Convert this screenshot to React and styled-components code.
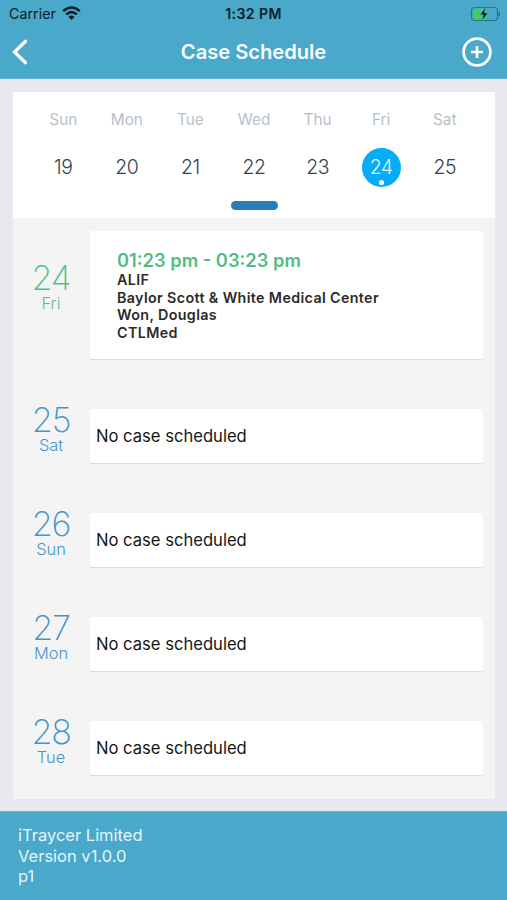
import React from 'react';
import styled, { createGlobalStyle } from 'styled-components';

const GlobalStyle = createGlobalStyle`
  *, *::before, *::after { box-sizing: border-box; }
  body { margin: 0; font-family: Inter, "Liberation Sans", sans-serif; }
`;

const Screen = styled.div`
  width: 507px;
  height: 900px;
  display: flex;
  flex-direction: column;
  background: #e9e8ee;
  overflow: hidden;
`;

const Header = styled.header`
  height: 79px;
  flex: none;
  background: #4aa8ca;
  border-bottom: 1px solid #68b3d0;
`;

const StatusBar = styled.div`
  height: 27px;
  display: grid;
  grid-template-columns: 1fr auto 1fr;
  align-items: center;
  padding: 0 6px;
  color: #0b1d26;
`;

const Carrier = styled.div`
  display: flex;
  align-items: center;
  gap: 6px;
  margin-left: 3px;
  font-size: 14.2px;
  letter-spacing: 0.05px;
`;

const Clock = styled.div`
  font-size: 14.1px;
  font-weight: 600;
  letter-spacing: 0.4px;
`;

const Battery = styled.svg`
  justify-self: end;
`;

const NavBar = styled.div`
  height: 50px;
  display: grid;
  grid-template-columns: 1fr auto 1fr;
  align-items: center;
  padding: 0 12px;
`;

const IconButton = styled.button`
  display: flex;
  padding: 0;
  border: 0;
  background: none;
  color: #fff;
  justify-self: ${(p) => p.$side};
  margin-right: ${(p) => (p.$side === 'end' ? '2px' : '0')};
`;

const Title = styled.h1`
  margin: 0;
  color: #f7fcfe;
  font-size: 20.2px;
  line-height: 50px;
  font-weight: 600;
  letter-spacing: -0.05px;
`;

const Body = styled.main`
  height: 732px;
  flex: none;
  padding: 13px 12px 12px 13px;
  display: flex;
  flex-direction: column;
`;

const Week = styled.section`
  height: 126px;
  flex: none;
  background: #fff;
  padding: 18px 18.5px 0;
`;

const DayGrid = styled.div`
  display: grid;
  grid-template-columns: repeat(7, 1fr);
  justify-items: center;
`;

const DayName = styled.div`
  height: 20px;
  line-height: 20px;
  font-size: 15.3px;
  color: #b7c0c8;
`;

const DayNumber = styled.div`
  position: relative;
  width: 39px;
  height: 39px;
  margin-top: 18px;
  border-radius: 50%;
  text-align: center;
  line-height: 39px;
  font-size: 19.4px;
  font-weight: 300;
  letter-spacing: -0.4px;
  color: ${(p) => (p.$selected ? '#e9f8ff' : '#34424e')};
  background: ${(p) => (p.$selected ? '#06adf5' : 'transparent')};
`;

const Dot = styled.span`
  position: absolute;
  left: 17px;
  bottom: 2px;
  width: 5px;
  height: 5px;
  border-radius: 50%;
  background: #fff;
`;

const Knob = styled.div`
  width: 47px;
  height: 9px;
  margin: 14px auto 0;
  border-radius: 4.5px;
  background: #267db9;
`;

const Agenda = styled.section`
  height: 581px;
  flex: none;
  background: #f4f4f4;
  padding: 13px 12px 0 0;
`;

const AgendaRow = styled.div`
  display: flex;
  align-items: flex-start;
  height: ${(p) => (p.$event ? '178px' : '104px')};

  &:last-child { height: 68px; }
`;

const DateLabel = styled.div`
  width: 77px;
  flex: none;
  text-align: center;
  padding-right: 1px;
  margin-top: ${(p) => (p.$event ? '29px' : '-7px')};
  color: ${(p) => (p.$event ? '#56be8a' : '#4595c8')};
`;

const BigNumber = styled.div`
  height: 34px;
  line-height: 36px;
  font-size: 34.2px;
  font-weight: 200;
  letter-spacing: -1.3px;
`;

const Weekday = styled.div`
  height: 18px;
  line-height: 18px;
  font-size: 16.4px;
  font-weight: 300;
`;

const Card = styled.article`
  flex: 1;
  height: ${(p) => (p.$event ? '128px' : '54px')};
  padding: ${(p) => (p.$event ? '18px 0 0 27px' : '0 0 0 6px')};
  background: #fff;
  border-radius: 2px;
  box-shadow: 0 1px 1px #d9d9db;
`;

const CaseTime = styled.div`
  height: 22px;
  line-height: 22px;
  font-size: 18.3px;
  font-weight: 600;
  color: #51bd83;
`;

const CaseDetail = styled.div`
  height: 17.5px;
  line-height: 17.5px;
  font-size: 14.3px;
  font-weight: 600;
  letter-spacing: 0.36px;
  color: #2b2b2b;
`;

const EmptyText = styled.div`
  line-height: 54px;
  font-size: 16.6px;
  color: #171717;
`;

const Footer = styled.footer`
  flex: 1;
  padding: 13px 18px;
  background: #4aa8ca;
  border-top: 1px solid #68b3d0;
  color: #e4f5fb;
  font-size: 16.5px;
  line-height: 20.7px;
`;

const week = [
  ['Sun', 19], ['Mon', 20], ['Tue', 21], ['Wed', 22], ['Thu', 23], ['Fri', 24], ['Sat', 25],
];
const details = ['ALIF', 'Baylor Scott & White Medical Center', 'Won, Douglas', 'CTLMed'];
const emptyDays = [[25, 'Sat'], [26, 'Sun'], [27, 'Mon'], [28, 'Tue']];

function WifiIcon() {
  return (
    <svg width="19" height="15" viewBox="0 0 19 15" fill="none" stroke="currentColor" strokeWidth="2.5">
      <path d="M1.2 5.1Q9.5-2.1 17.8 5.1" />
      <path d="M4.2 8.4Q9.5 3.8 14.8 8.4" />
      <path d="M6.5 10.8Q9.5 8.1 12.5 10.8L9.5 14Z" fill="currentColor" stroke="none" />
    </svg>
  );
}

function BatteryIcon() {
  return (
    <Battery width="31" height="16" viewBox="0 0 31 16" fill="none">
      <rect x="1.5" y="1.5" width="26" height="13" rx="3" stroke="#2c7590" strokeWidth="1.2" />
      <rect x="3.2" y="3.2" width="13.5" height="9.6" rx="1.3" fill="#3fcf62" />
      <path d="M29 6Q30.5 8 29 10Z" fill="#2c7590" stroke="#2c7590" />
      <path d="M15.6 1.5L10.2 8.8H13.4L12 14.5L17.8 7H14.5Z" fill="#071318" stroke="#4aa8ca" strokeWidth=".6" />
    </Battery>
  );
}

export default function App() {
  return (
    <>
      <GlobalStyle />
      <Screen>
        <Header>
          <StatusBar>
            <Carrier>Carrier<WifiIcon /></Carrier>
            <Clock>1:32 PM</Clock>
            <BatteryIcon />
          </StatusBar>
          <NavBar>
            <IconButton $side="start" aria-label="Back">
              <svg width="18" height="28" viewBox="0 0 18 28" fill="none" stroke="currentColor" strokeWidth="3.3" strokeLinecap="round">
                <path d="M13.5 3.3L2.5 14L13.5 24.7" />
              </svg>
            </IconButton>
            <Title>Case Schedule</Title>
            <IconButton $side="end" aria-label="Add case">
              <svg width="32" height="32" viewBox="0 0 32 32" fill="none" stroke="currentColor" strokeWidth="2.7">
                <circle cx="16" cy="16" r="13.4" />
                <path d="M16 10v12M10 16h12" />
              </svg>
            </IconButton>
          </NavBar>
        </Header>
        <Body>
          <Week>
            <DayGrid>
              {week.map(([name]) => <DayName key={name}>{name}</DayName>)}
              {week.map(([name, day]) => (
                <DayNumber key={name} $selected={day === 24}>
                  {day}
                  {day === 24 && <Dot />}
                </DayNumber>
              ))}
            </DayGrid>
            <Knob />
          </Week>
          <Agenda>
            <AgendaRow $event>
              <DateLabel $event>
                <BigNumber>24</BigNumber>
                <Weekday>Fri</Weekday>
              </DateLabel>
              <Card $event>
                <CaseTime>01:23 pm - 03:23 pm</CaseTime>
                {details.map((line) => <CaseDetail key={line}>{line}</CaseDetail>)}
              </Card>
            </AgendaRow>
            {emptyDays.map(([day, name]) => (
              <AgendaRow key={day}>
                <DateLabel>
                  <BigNumber>{day}</BigNumber>
                  <Weekday>{name}</Weekday>
                </DateLabel>
                <Card><EmptyText>No case scheduled</EmptyText></Card>
              </AgendaRow>
            ))}
          </Agenda>
        </Body>
        <Footer>
          <div>iTraycer Limited</div>
          <div>Version v1.0.0</div>
          <div>p1</div>
        </Footer>
      </Screen>
    </>
  );
}
